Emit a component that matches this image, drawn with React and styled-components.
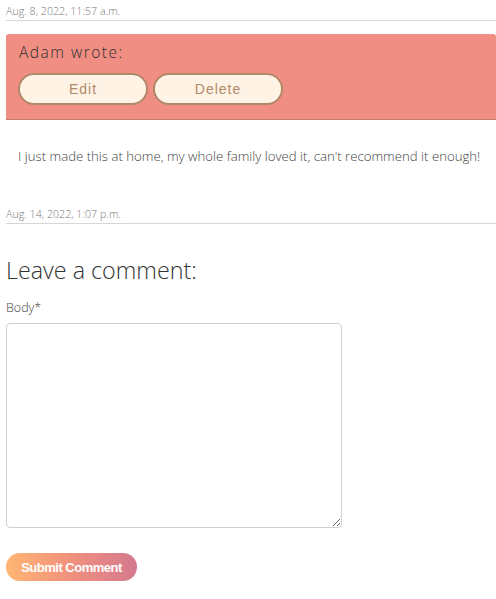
import React from "react";
import styled, { createGlobalStyle } from "styled-components";

const Global = createGlobalStyle`
  html, body { margin: 0; padding: 0; background: #fff; }
  body { font-family: "Open Sans", "Noto Sans", sans-serif; color: #333; }
`;

const Page = styled.div`
  padding: 5px 0 0 6px;
`;

const DateLine = styled.div`
  font-size: 10.7px;
  font-weight: 300;
  color: #777;
  line-height: 12px;
  padding-bottom: 3px;
  border-bottom: 1px solid #d6d6d6;
`;

const CommentHeader = styled.div`
  margin-top: 13px;
  background: #f08e84;
  border-radius: 3px 3px 0 0;
  border-bottom: 1px solid #c8786f;
  padding: 8px 12px 13px 12px;
  height: 64px;
`;

const Author = styled.div`
  font-size: 15.5px;
  font-weight: 300;
  letter-spacing: 1.5px;
  color: #2e2e2e;
  line-height: 20px;
  padding-left: 1px;
`;

const Actions = styled.div`
  display: flex;
  gap: 5px;
  margin-top: 11px;
`;

const PillButton = styled.button`
  width: 130px;
  height: 32px;
  border-radius: 16px;
  border: 2px solid #b08a68;
  background: #fff3e6;
  color: #b08a68;
  font-family: "Liberation Sans", Arial, sans-serif;
  font-size: 14px;
  letter-spacing: 1px;
  padding: 0;
`;

const Body = styled.p`
  margin: 0;
  padding: 28px 12px 0 12px;
  font-size: 13.2px;
  font-weight: 300;
  color: #444;
  line-height: 16px;
  height: 60px;
`;

const FormTitle = styled.h2`
  margin: 32px 0 0 0;
  font-weight: 300;
  font-size: 23.3px;
  line-height: 28px;
  color: #333;
`;

const Label = styled.label`
  display: block;
  margin-top: 16px;
  font-size: 12.5px;
  font-weight: 300;
  color: #444;
  line-height: 16px;
`;

const TextArea = styled.textarea`
  display: block;
  margin-top: 7px;
  width: 336px;
  height: 205px;
  box-sizing: border-box;
  border: 1px solid #cfcfd4;
  border-radius: 4px;
  resize: vertical;
`;

const Submit = styled.button`
  margin-top: 25px;
  width: 131px;
  height: 28px;
  border: none;
  border-radius: 14px;
  background: linear-gradient(90deg, #ffb673 0%, #f0907e 50%, #d4798f 100%);
  color: #fff;
  font-family: "Liberation Sans", Arial, sans-serif;
  font-weight: bold;
  font-size: 13px;
  letter-spacing: -0.5px;
  padding: 0;
`;

export default function App() {
  return (
    <Page>
      <Global />
      <DateLine>Aug. 8, 2022, 11:57 a.m.</DateLine>
      <CommentHeader>
        <Author>Adam wrote:</Author>
        <Actions>
          <PillButton>Edit</PillButton>
          <PillButton>Delete</PillButton>
        </Actions>
      </CommentHeader>
      <Body>I just made this at home, my whole family loved it, can't recommend it enough!</Body>
      <DateLine>Aug. 14, 2022, 1:07 p.m.</DateLine>
      <FormTitle>Leave a comment:</FormTitle>
      <Label>Body*</Label>
      <TextArea />
      <Submit>Submit Comment</Submit>
    </Page>
  );
}
